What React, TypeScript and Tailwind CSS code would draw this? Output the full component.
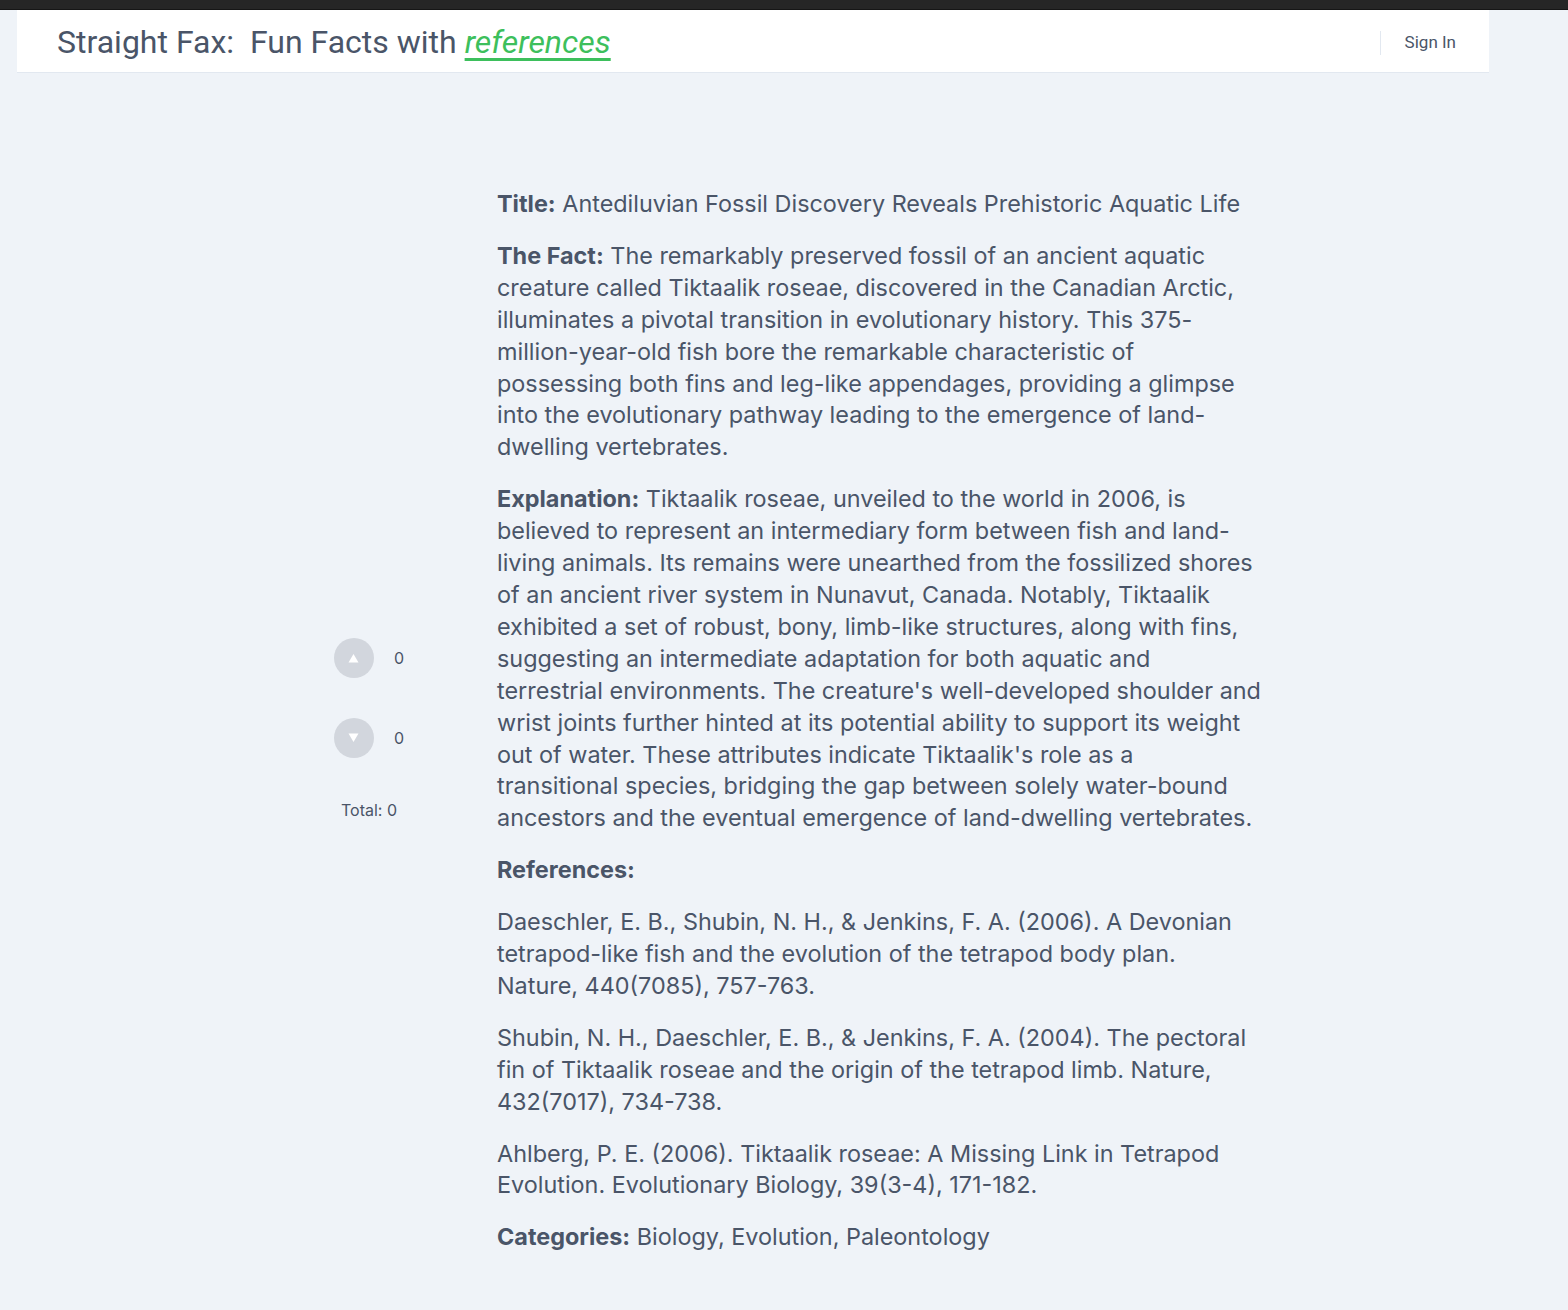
import React from "react";

function Tri({ up }: { up: boolean }) {
  return (
    <svg width="11" height="10" viewBox="0 0 11 10" className="block">
      {up ? <polygon points="5.5,1 10.5,9.5 0.5,9.5" fill="#ffffff" /> : <polygon points="0.5,0.5 10.5,0.5 5.5,9" fill="#ffffff" />}
    </svg>
  );
}

export default function App() {
  const refs = [
    "Daeschler, E. B., Shubin, N. H., & Jenkins, F. A. (2006). A Devonian tetrapod-like fish and the evolution of the tetrapod body plan. Nature, 440(7085), 757-763.",
    "Shubin, N. H., Daeschler, E. B., & Jenkins, F. A. (2004). The pectoral fin of Tiktaalik roseae and the origin of the tetrapod limb. Nature, 432(7017), 734-738.",
    "Ahlberg, P. E. (2006). Tiktaalik roseae: A Missing Link in Tetrapod Evolution. Evolutionary Biology, 39(3-4), 171-182.",
  ];
  return (
    <div className="min-h-[1310px] bg-[#eff3f8] text-[#4a5568]" style={{ fontFamily: "Inter, 'Noto Sans', sans-serif" }}>
      <div className="h-[10px] bg-[#262626] border-b border-[#161616]" />
      <header
        className="ml-[17px] w-[1472px] h-[63px] bg-white border-b border-[#e2e8f0] flex items-center justify-between pl-[40px] pr-[33px]"
        style={{ fontFamily: "Roboto, 'Liberation Sans', sans-serif" }}
      >
        <h1 className="text-[32px] leading-none text-[#4a5568] whitespace-pre pt-[2px]">
          {"Straight Fax:  Fun Facts with "}
          <a className="italic text-[#3dbf5c] underline decoration-[#3dbf5c] decoration-[3px] underline-offset-[5px]">references</a>
        </h1>
        <div className="flex items-center h-[24px] border-l border-[#e2e8f0] pl-[24px] mt-[3px]">
          <span className="text-[17px] text-[#4a5568]">Sign In</span>
        </div>
      </header>
      <main className="flex items-center pl-[334px] pt-[115px] pb-[57px]">
        <div className="w-[163px] flex flex-col pt-[18px]">
          <div className="w-[70px] flex flex-col items-center">
            <div className="flex items-center gap-[20px]">
              <div className="w-[40px] h-[40px] rounded-full bg-[#d2d6dd] flex items-center justify-center">
                <Tri up />
              </div>
              <span className="text-[16px] leading-6">0</span>
            </div>
            <div className="flex items-center gap-[20px] mt-[40px]">
              <div className="w-[40px] h-[40px] rounded-full bg-[#d2d6dd] flex items-center justify-center">
                <Tri up={false} />
              </div>
              <span className="text-[16px] leading-6">0</span>
            </div>
            <div className="mt-[40px] text-[16px] leading-6">Total: 0</div>
          </div>
        </div>
        <div className="w-[764px] text-[23.4px] leading-[31.9px] flex flex-col gap-[20px]">
          <p>
            <span className="font-bold">Title:</span> Antediluvian Fossil Discovery Reveals Prehistoric Aquatic Life
          </p>
          <p>
            <span className="font-bold">The Fact:</span> The remarkably preserved fossil of an ancient aquatic creature called Tiktaalik roseae, discovered in the Canadian Arctic, illuminates a pivotal transition in evolutionary history. This 375-million-year-old fish bore the remarkable characteristic of possessing both fins and leg-like appendages, providing a glimpse into the evolutionary pathway leading to the emergence of land-dwelling vertebrates.
          </p>
          <p>
            <span className="font-bold">Explanation:</span> Tiktaalik roseae, unveiled to the world in 2006, is believed to represent an intermediary form between fish and land-living animals. Its remains were unearthed from the fossilized shores of an ancient river system in Nunavut, Canada. Notably, Tiktaalik exhibited a set of robust, bony, limb-like structures, along with fins, suggesting an intermediate adaptation for both aquatic and terrestrial environments. The creature's well-developed shoulder and wrist joints further hinted at its potential ability to support its weight out of water. These attributes indicate Tiktaalik's role as a transitional species, bridging the gap between solely water-bound ancestors and the eventual emergence of land-dwelling vertebrates.
          </p>
          <p className="font-bold">References:</p>
          {refs.map((r) => (
            <p key={r}>{r}</p>
          ))}
          <p>
            <span className="font-bold">Categories:</span> Biology, Evolution, Paleontology
          </p>
        </div>
      </main>
    </div>
  );
}
